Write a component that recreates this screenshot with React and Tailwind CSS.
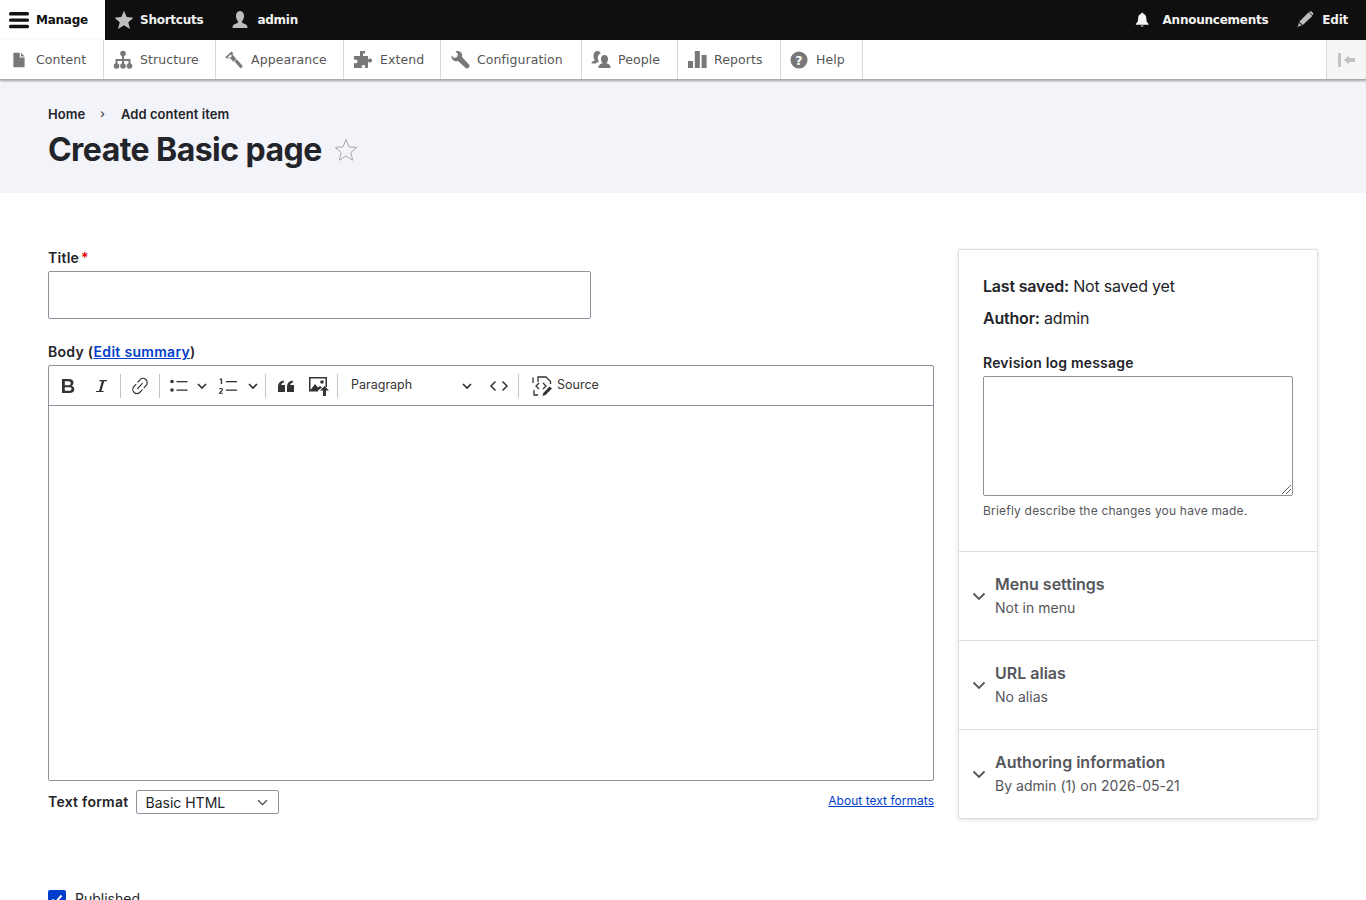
import React from "react";

const G = "#787878";
const Svg = ({ s = 20, vb = "0 0 20 20", children, className = "" }) => (
  <svg width={s} height={s} viewBox={vb} className={`shrink-0 ${className}`}>{children}</svg>
);

const icons = {
  content: <path fill={G} d="M3 1h8v6h6v12H3zM12.500 1 17 5.700h-4.500z" />,
  structure: <g fill={G}><circle cx="10" cy="3.500" r="2.800"/><circle cx="3.500" cy="16" r="2.800"/><circle cx="10" cy="16" r="2.800"/><circle cx="16.500" cy="16" r="2.800"/><path d="M9 5h2v4h6.500v5h-2v-3H11v3H9v-3H4.500v3h-2V9H9z"/></g>,
  appearance: <g fill={G}><path d="M1 7.500 7.500 1.500l1.800 1.800-1 1 4 4.700-3 2.700-4-4.500-1.500 1.300zM3.500 7.400 5 8.800 8 6 6.700 4.500z" fillRule="evenodd"/><path d="m10.500 11.500 2.300-2.200 6 7-2.200 2.200z"/></g>,
  extend: <path fill={G} d="M7 1h5v2.500H10V6h5v3.500c1-1.500 4-1.500 4 1s-3 2.500-4 1V18h-3.500c1.500-1 1-3-1-3s-2.500 2-1 3H1v-5.500c1 1.500 3.500 1 3.500-1S2 9 1 10V6h6V3.500H7z"/>,
  config: <path fill={G} d="M1.500 5.500 4 8l3-1 1-3-2.500-2.500C8 .5 11 1.500 12 4c.4 1 .3 2 0 3l7 7.500c.8 1 .6 2.300-.3 3.200-.9.900-2.400 1-3.300.1L8 11c-1.500.5-3 .3-4.300-.6C2 9.200 1 7.500 1.500 5.500z"/>,
  people: <g fill={G}><path d="M.5 13.500c0-1.700 1.200-2.500 3.500-3-1-1-1.500-2.500-1.500-4.500 0-3 1.300-5 3.800-5 1.700 0 2.900.9 3.400 2.300-1.800.7-2.900 2.400-2.900 4.700 0 1.500.4 2.800 1.100 3.700-1.500.5-2.500 1-3.100 1.800z"/><path d="M13.500 5c2.300 0 3.500 1.700 3.500 4 0 2-.7 3.500-1.700 4.300 2.500.7 4.200 1.500 4.200 4.700H7.500c0-3.200 1.700-4 4.200-4.700-1-.8-1.700-2.300-1.700-4.300 0-2.300 1.200-4 3.500-4z"/></g>,
  reports: <g fill={G}><rect x="1" y="11" width="5" height="7"/><rect x="7.800" y="1" width="5" height="17"/><rect x="14.600" y="5" width="5" height="13"/></g>,
};

function AdminItem({ icon, label, w }) {
  return (
    <a className={`flex h-full items-center gap-[7px] border-r border-[#d8d8d8] ${w}`}>
      {icon}
      <span className="mt-[1px] text-[12.500px] tracking-[0.08px] text-[#565656]">{label}</span>
    </a>
  );
}

const HelpIcon = (
  <Svg s={18} className="mr-[1px]">
    <circle cx="10" cy="10" r="9.500" fill={G} />
    <text x="10" y="15" textAnchor="middle" fontSize="14" fontWeight="700" fill="#fff" fontFamily="'DejaVu Sans',sans-serif">?</text>
  </Svg>
);

function Toolbars() {
  return (
    <header className="font-['DejaVu_Sans',sans-serif]">
      <div className="flex h-10 items-center bg-[#0f0f0f] text-[12px] font-bold tracking-[-0.25px] text-[#f2f2f2]">
        <a className="flex h-full w-[105px] items-center gap-[7px] bg-white pl-[9px] text-[#111]">
          <Svg s={20}>
            <g fill="#111"><rect y="2" width="20" height="3.400" rx="1.500"/><rect y="8.400" width="20" height="3.400" rx="1.500"/><rect y="14.800" width="20" height="3.400" rx="1.500"/></g>
          </Svg>
          Manage
        </a>
        <a className="ml-[9px] flex items-center gap-[6px]">
          <Svg s={20}><path fill="#bdbdbd" d="m10 .8 2.700 6.300 6.800.6-5.200 4.500 1.600 6.700L10 15.300l-5.900 3.600 1.600-6.700L.5 7.700l6.800-.6z"/></Svg>
          Shortcuts
        </a>
        <a className="ml-[27px] flex items-center gap-[7px]">
          <Svg s={20}><path fill="#bdbdbd" d="M10 1c2.700 0 4 2.200 4 5 0 2.500-1 4.500-2.200 5.300 0 1 .2 1.700 2.200 2.400 2 .7 3.500 1.200 3.500 4.300h-15c0-3.100 1.500-3.600 3.500-4.300s2.200-1.400 2.200-2.400C7 10.500 6 8.500 6 6c0-2.800 1.300-5 4-5z"/></Svg>
          admin
        </a>
        <a className="ml-auto flex items-center gap-[11px]">
          <Svg s={17}><path fill="#f5f5f5" d="M8.500 1c1 0 1.400.6 1.500 1.300 2.300.6 3.300 2.500 3.300 5 0 3.500 1 5 2.700 6.700v1H1v-1c1.700-1.700 2.700-3.200 2.700-6.700 0-2.500 1-4.400 3.300-5C7.100 1.600 7.500 1 8.500 1zM6.800 16h3.400c0 .7-.7 1.200-1.700 1.200s-1.700-.5-1.700-1.200z"/></Svg>
          Announcements
        </a>
        <a className="ml-[29px] mr-[18px] flex items-center gap-[7px]">
          <Svg s={18}><path fill="#bdbdbd" d="M13 1.500 17 5.500 6.500 15.500l-4-3.500zM14.300 .7c.7-.6 1.500-.5 2 0l1.500 1.500c.5.600.5 1.300 0 1.900L17.300 4.700 13.500 1zM2 13l3.500 3-3 .8-1.500 1.200-.5-.5 1-1.300z"/></Svg>
          Edit
        </a>
      </div>
      <div className="relative z-10 flex h-10 items-stretch border-b border-[#aaa] bg-white shadow-[0_1px_2px_rgba(0,0,0,0.35)]">
        <AdminItem w="w-[104px] pl-[11px]" label="Content" icon={<Svg s={16} className="mr-[2px]">{icons.content}</Svg>} />
        <AdminItem w="w-[112px] pl-[9px]" label="Structure" icon={<Svg>{icons.structure}</Svg>} />
        <AdminItem w="w-[128px] pl-[8px]" label="Appearance" icon={<Svg>{icons.appearance}</Svg>} />
        <AdminItem w="w-[97px] pl-[9px]" label="Extend" icon={<Svg>{icons.extend}</Svg>} />
        <AdminItem w="w-[141px] pl-[9px]" label="Configuration" icon={<Svg>{icons.config}</Svg>} />
        <AdminItem w="w-[96px] pl-[9px]" label="People" icon={<Svg>{icons.people}</Svg>} />
        <AdminItem w="w-[103px] pl-[9px]" label="Reports" icon={<Svg>{icons.reports}</Svg>} />
        <AdminItem w="w-[82px] pl-[9px]" label="Help" icon={HelpIcon} />
        <div className="ml-auto flex w-[40px] items-center justify-center border-l border-[#d8d8d8] bg-[#f5f5f5]">
          <Svg s={20}><g fill="#c2c2c2"><rect x="1" y="3" width="3" height="14"/><path d="m7 10 5-4.500V8h6v4h-6v2.500z"/></g></Svg>
        </div>
      </div>
    </header>
  );
}

const Sep = ({ className = "" }) => <span className={`h-[24px] w-px bg-[#c4c4c4] ${className}`} />;
const Chev = ({ className = "", s = 10, c = "#333", sw = 1.700 }) => (
  <svg width={s} height={s} viewBox="0 0 10 10" className={`shrink-0 ${className}`}>
    <path d="m1 3 4 4 4-4" fill="none" stroke={c} strokeWidth={sw} />
  </svg>
);

function EditorToolbar() {
  return (
    <div className="flex h-[40px] items-center border-b border-[#8e929c] text-[#222]">
      <span className="ml-[12px] w-[14px]">
        <Svg s={14} vb="0 0 14 16" className="h-[16px]"><path fill="#333" fillRule="evenodd" d="M1 1h7c3 0 4.500 1.500 4.500 3.800 0 1.500-.8 2.600-2 3 1.700.4 2.800 1.700 2.800 3.400 0 2.500-1.800 3.800-4.800 3.800H1zM3.800 3.300v3.900H7.500c1.500 0 2.200-.8 2.200-2S9 3.300 7.500 3.300zm0 6v3.400H8c1.600 0 2.500-.6 2.500-1.800S9.600 9.300 8 9.300z"/></Svg>
      </span>
      <Svg s={14} vb="0 0 14 14" className="ml-[20px]"><path fill="#333" d="M4.500 1H12v1.200H9.200L6.400 12h2.300v1H1v-1h3L6.800 2.200H4.300z"/></Svg>
      <Sep className="ml-[11px]" />
      <Svg s={20} className="ml-[9px]">
        <g fill="none" stroke="#333" strokeWidth="1.200" strokeLinecap="round" transform="rotate(-48 10 10)">
          <path d="M8.500 5.800H5.500a4.200 4.200 0 0 0 0 8.400h3"/>
          <path d="M11.500 5.800h3a4.200 4.200 0 0 1 0 8.400h-3"/>
          <path d="M6.500 10h7"/>
        </g>
      </Svg>
      <Sep className="ml-[9px]" />
      <Svg s={20} className="ml-[9px]"><g fill="#333"><circle cx="3" cy="5.500" r="1.800"/><circle cx="3" cy="14" r="1.800"/><rect x="7.500" y="5" width="11" height="1.300"/><rect x="7.500" y="13.500" width="11" height="1.300"/></g></Svg>
      <Chev className="ml-[8px]" />
      <Svg s={20} className="ml-[11px]">
        <path fill="#333" d="M2.800 2.500h1.300v5.500H2.800zM1.700 3l1.100-.5v1.200l-1.100.3z"/>
        <path d="M1.500 13.300c.5-1.200 3-1.200 3 .3 0 1.200-2.400 2-3 3.600h3.300" fill="none" stroke="#333" strokeWidth="1.100"/>
        <g fill="#333"><rect x="8" y="5" width="11" height="1.300"/><rect x="8" y="13.500" width="11" height="1.300"/></g>
      </Svg>
      <Chev className="ml-[10px]" />
      <Sep className="ml-[7px]" />
      <Svg s={16} vb="0 0 16 16" className="ml-[12px]"><path fill="#333" d="M0 14V8.500C0 5 2 3 5.500 2.500l.7 1.800C4.500 4.800 3.500 5.700 3.300 7H7v7zM9 14V8.500C9 5 11 3 14.500 2.500l.7 1.800c-1.700.5-2.700 1.400-2.900 2.700H16v7z"/></Svg>
      <Svg s={22} vb="0 0 22 22" className="ml-[14px]">
        <path fill="#333" fillRule="evenodd" d="M1 2h18v10h-1.500V3.500h-15V15H10v1.500H1z"/>
        <path fill="#333" d="M2.500 15 7 9l3 3.500 2-1.500 2 1.500L10 15.500z"/><circle cx="14" cy="7" r="1.800" fill="#333"/>
        <path fill="#333" d="m16.500 11 4.500 4.500h-3v5.500h-3v-5.500h-3z"/>
      </Svg>
      <Sep className="ml-[7px]" />
      <span className="ml-[13px] w-[100px] text-[12.500px] text-[#333]">Paragraph</span>
      <Chev className="ml-[11px]" />
      <Svg s={20} className="ml-[17px]"><path d="M6.500 5.500 2 10l4.500 4.500M13.500 5.500 18 10l-4.500 4.500" fill="none" stroke="#333" strokeWidth="1.500"/></Svg>
      <Sep className="ml-[9px]" />
      <Svg s={22} vb="0 0 22 22" className="ml-[13px]">
        <path d="M6 7V2h8l4.500 4.500V9M1 8V2.500M6 20H2v-5" fill="none" stroke="#333" strokeWidth="1.300"/>
        <path d="M7 8 4 11l3 3M11 8l3 3-3 3" fill="none" stroke="#333" strokeWidth="1.300"/>
        <path fill="#333" d="m17.500 11.500 2.500 2-6.500 6.500-3 1 .8-3z"/>
      </Svg>
      <span className="ml-[3px] text-[12.500px] text-[#333]">Source</span>
    </div>
  );
}

function Accordion({ title, sub }) {
  return (
    <div className="flex h-[89px] items-center border-t border-[#dedfe4] pl-[13px]">
      <Svg s={14} vb="0 0 14 14" className="mr-[9px]"><path d="m1.500 4.500 5.500 5.500 5.500-5.500" fill="none" stroke="#55565b" strokeWidth="1.800"/></Svg>
      <div className="-mt-[1px]">
        <div className="text-[16px] leading-[20px] font-semibold text-[#55565b]">{title}</div>
        <div className="mt-[5px] text-[14px] leading-[18px] tracking-[0.02px] text-[#55565b]">{sub}</div>
      </div>
    </div>
  );
}

export default function App() {
  return (
    <div className="h-[900px] overflow-hidden bg-white font-['Inter',sans-serif] text-[#232429]">
      <Toolbars />
      <div className="h-[113px] bg-[#f3f4f9] px-12 pt-[25px]">
        <nav className="flex h-[18px] items-center text-[13px] leading-[18px] font-semibold tracking-[0.06px] text-[#232429]">
          <span>Home</span>
          <span className="ml-[15px] mr-[16px] text-[12px] font-normal">›</span>
          <span>Add content item</span>
        </nav>
        <div className="mt-[6px] flex items-center">
          <h1 className="text-[32px] leading-[42px] font-bold tracking-[-0.55px] text-[#232429]">Create Basic page</h1>
          <Svg s={24} vb="0 0 24 24" className="ml-[12px]">
            <path d="m12 1.500 3 7.300 7.800.6-6 5.100 1.900 7.700L12 18l-6.700 4.200 1.900-7.700-6-5.100 7.800-.6z" fill="none" stroke="#a8a8a8" strokeWidth="1"/>
          </Svg>
        </div>
      </div>

      <main className="flex items-start gap-6 px-12 pt-14">
        <div className="w-[886px] shrink-0">
          <label className="block text-[14px] leading-[18px] font-semibold tracking-[0.25px]">Title<span className="ml-[2px] text-[#e00000]">*</span></label>
          <div className="mt-[4px] h-12 w-[543px] rounded-[2px] border border-[#8e929c] bg-white" />
          <div className="mt-[24px] text-[14px] leading-[18px] font-semibold tracking-[0.3px]">
            Body (<a className="text-[#003ecc] underline">Edit summary</a>)
          </div>
          <div className="mt-[4px] h-[416px] rounded-[2px] border border-[#8e929c]">
            <EditorToolbar />
          </div>
          <div className="mt-[8px] flex h-6 items-center">
            <span className="text-[14px] font-semibold tracking-[0.25px]">Text format</span>
            <span className="ml-[8px] mt-[2px] flex h-6 w-[143px] items-center justify-between rounded-[2px] border border-[#8e929c] pl-2 pr-[10px] text-[14px] text-[#232429]">
              Basic HTML
              <Chev s={11} c="#444" sw={1.100} />
            </span>
            <a className="ml-auto text-[12px] tracking-[0.03px] text-[#003ecc] underline">About text formats</a>
          </div>
          <div className="mt-[75px] flex items-center gap-[9px]">
            <span className="flex size-[18px] items-center justify-center rounded-[2px] bg-[#003ecc]">
              <svg width="14" height="14" viewBox="0 0 14 14"><path d="m2.500 7.500 3 3 6-7" fill="none" stroke="#fff" strokeWidth="2"/></svg>
            </span>
            <span className="text-[14px] text-[#232429]">Published</span>
          </div>
        </div>

        <aside className="w-[360px] shrink-0 rounded-[2px] border border-[#dedfe4] shadow-[0_1px_4px_rgba(0,0,0,0.12)]">
          <div className="h-[301px] px-6 pt-[24px]">
            <p className="text-[16px] leading-[24px] tracking-[-0.2px]"><b className="font-semibold">Last saved:</b> Not saved yet</p>
            <p className="mt-[8px] text-[16px] leading-[24px] tracking-[-0.2px]"><b className="font-semibold">Author:</b> admin</p>
            <div className="mt-[24px] text-[14px] leading-[18px] font-semibold tracking-[0.2px]">Revision log message</div>
            <div className="relative mt-[4px] h-[120px] w-[310px] rounded-[2px] border border-[#8e929c]">
              <svg width="9" height="9" viewBox="0 0 9 9" className="absolute right-[1px] bottom-[1px]"><path d="M0 9 9 0M4 9l5-5" stroke="#666" strokeWidth="1"/></svg>
            </div>
            <p className="mt-[6px] text-[12px] leading-[18px] tracking-[0.2px] text-[#55565b]">Briefly describe the changes you have made.</p>
          </div>
          <Accordion title="Menu settings" sub="Not in menu" />
          <Accordion title="URL alias" sub="No alias" />
          <Accordion title="Authoring information" sub="By admin (1) on 2026-05-21" />
        </aside>
      </main>
    </div>
  );
}
